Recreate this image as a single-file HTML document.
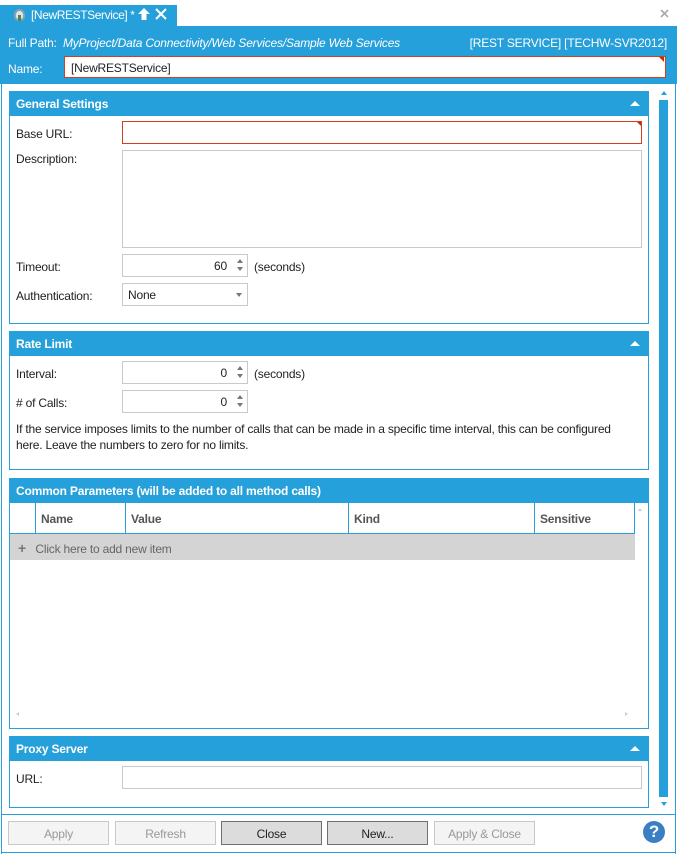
<!DOCTYPE html>
<html><head><meta charset="utf-8"><style>
*{box-sizing:border-box;margin:0;padding:0}
body{width:677px;height:856px;background:#fff;font-family:"Liberation Sans",sans-serif;font-size:12px;color:#222;position:relative;overflow:hidden;letter-spacing:-0.2px}
.a{position:absolute}
.blue{background:#26a0da}
.hdr{position:absolute;left:9px;width:640px;height:25px;background:#26a0da;color:#fff;font-weight:bold;padding:6px 7px;font-size:12px}
.hdr .tri{position:absolute;right:9px;top:10px;width:0;height:0;border-left:5px solid transparent;border-right:5px solid transparent;border-bottom:5px solid #fff}
.box{position:absolute;left:9px;width:640px;border:1px solid #26a0da;border-top:none;background:#fff}
.inp{position:absolute;border:1px solid #c9c9c9;background:#fff}
.lbl{position:absolute;left:16px}
.spin{position:absolute;right:3px;top:4px;width:7px}
.spin:before{content:"";position:absolute;left:0;top:0;border-left:3.5px solid transparent;border-right:3.5px solid transparent;border-bottom:4px solid #777}
.spin:after{content:"";position:absolute;left:0;top:8px;border-left:3.5px solid transparent;border-right:3.5px solid transparent;border-top:4px solid #777}
.btn{position:absolute;top:821px;height:24px;width:101px;border:1px solid #c8c8c8;background:#f4f4f4;color:#999;text-align:center;line-height:24px}
.btn.on{background:#dcdcdc;border-color:#707070;color:#222}
.gh{position:absolute;top:502px;height:31px;border-right:1px solid #26a0da;font-weight:bold;color:#555;padding:10px 5px}
</style></head><body>
<div class="a blue" style="left:0;top:5px;width:177px;height:22px"></div>
<div class="a blue" style="left:0;top:26px;width:677px;height:58px"></div>
<div class="a" style="left:14px;top:9px;width:11px;height:12px;border-radius:50% 50% 40% 40%;background:#dfe7ec;border:2px solid #8ca0ae"></div>
<div class="a" style="left:18px;top:15px;width:3px;height:6px;background:#4a8a4a"></div>
<div class="a" style="left:31px;top:8px;color:#fff;font-size:12px;letter-spacing:-0.4px">[NewRESTService] *</div>
<svg class="a" style="left:137px;top:7px" width="14" height="14"><path d="M7 1 L13 7 H9.5 V13 H4.5 V7 H1 Z" fill="#fff"/></svg>
<svg class="a" style="left:155px;top:8px" width="12" height="12"><path d="M1 1 L11 11 M11 1 L1 11" stroke="#fff" stroke-width="2"/></svg>
<svg class="a" style="left:660px;top:9px" width="9" height="9"><path d="M1 1 L8 8 M8 1 L1 8" stroke="#aaa" stroke-width="1.6"/></svg>
<div class="a" style="left:8px;top:36px;color:#fff">Full Path: <i>&nbsp;MyProject/Data Connectivity/Web Services/Sample Web Services</i></div>
<div class="a" style="right:10px;top:36px;color:#fff">[REST SERVICE] [TECHW-SVR2012]</div>
<div class="a" style="left:8px;top:62px;color:#fff">Name:</div>
<div class="a" style="left:64px;top:56px;width:602px;height:22px;background:#fff;border:1px solid #d04020;padding:4px 6px">[NewRESTService]</div>
<div class="a" style="left:659px;top:57px;border-left:5px solid transparent;border-top:5px solid #c03010"></div>
<div class="a" style="left:1px;top:84px;width:1px;height:770px;background:#26a0da"></div>
<div class="a" style="left:675px;top:84px;width:1px;height:770px;background:#26a0da"></div>
<div class="a" style="left:1px;top:852px;width:675px;height:1px;background:#26a0da"></div>
<div class="a" style="left:1px;top:814px;width:675px;height:1px;background:#26a0da"></div>
<div class="a" style="left:661px;top:91px;border-left:3px solid transparent;border-right:3px solid transparent;border-bottom:4px solid #26a0da"></div>
<div class="a blue" style="left:659px;top:100px;width:9px;height:697px"></div>
<div class="a" style="left:661px;top:802px;border-left:3px solid transparent;border-right:3px solid transparent;border-top:4px solid #26a0da"></div>

<div class="hdr" style="top:91px">General Settings<div class="tri"></div></div>
<div class="box" style="top:116px;height:208px"></div>
<div class="lbl" style="top:127px">Base URL:</div>
<div class="inp" style="left:122px;top:121px;width:520px;height:23px;border-color:#d04020"></div>
<div class="a" style="left:637px;top:122px;border-left:4px solid transparent;border-top:4px solid #c03010"></div>
<div class="lbl" style="top:152px">Description:</div>
<div class="inp" style="left:122px;top:150px;width:520px;height:98px"></div>
<div class="lbl" style="top:260px">Timeout:</div>
<div class="inp" style="left:122px;top:254px;width:126px;height:23px"><span class="a" style="right:20px;top:4px">60</span><div class="spin"></div></div>
<div class="a" style="left:254px;top:260px">(seconds)</div>
<div class="lbl" style="top:289px">Authentication:</div>
<div class="inp" style="left:122px;top:283px;width:126px;height:23px"><span class="a" style="left:5px;top:4px">None</span><div class="a" style="right:5px;top:9px;border-left:3.5px solid transparent;border-right:3.5px solid transparent;border-top:4px solid #777"></div></div>

<div class="hdr" style="top:331px">Rate Limit<div class="tri"></div></div>
<div class="box" style="top:356px;height:114px"></div>
<div class="lbl" style="top:367px">Interval:</div>
<div class="inp" style="left:122px;top:361px;width:126px;height:23px"><span class="a" style="right:20px;top:4px">0</span><div class="spin"></div></div>
<div class="a" style="left:254px;top:367px">(seconds)</div>
<div class="lbl" style="top:396px"># of Calls:</div>
<div class="inp" style="left:122px;top:390px;width:126px;height:23px"><span class="a" style="right:20px;top:4px">0</span><div class="spin"></div></div>
<div class="a" style="left:16px;top:421px;width:612px;line-height:16px">If the service imposes limits to the number of calls that can be made in a specific time interval, this can be configured here. Leave the numbers to zero for no limits.</div>

<div class="hdr" style="top:478px">Common Parameters (will be added to all method calls)</div>
<div class="box" style="top:503px;height:226px"></div>
<div class="gh" style="left:10px;width:26px"></div>
<div class="gh" style="left:36px;width:90px">Name</div>
<div class="gh" style="left:126px;width:223px">Value</div>
<div class="gh" style="left:349px;width:186px">Kind</div>
<div class="gh" style="left:535px;width:100px">Sensitive</div>
<div class="a" style="left:10px;top:533px;width:625px;height:1px;background:#26a0da"></div>
<div class="a" style="left:10px;top:534px;width:625px;height:26px;background:#d5d4d4;color:#666;padding:6px 0 0 8px"><b style="font-size:14px;color:#777">+</b>&nbsp;&nbsp; Click here to add new item</div>
<div class="a" style="left:638px;top:508px;border-left:2.5px solid transparent;border-right:2.5px solid transparent;border-bottom:3px solid #ccc"></div>
<div class="a" style="left:16px;top:712px;border-top:2.5px solid transparent;border-bottom:2.5px solid transparent;border-right:3px solid #ccc"></div>
<div class="a" style="left:625px;top:712px;border-top:2.5px solid transparent;border-bottom:2.5px solid transparent;border-left:3px solid #ccc"></div>

<div class="hdr" style="top:736px">Proxy Server<div class="tri"></div></div>
<div class="box" style="top:761px;height:47px"></div>
<div class="lbl" style="top:772px">URL:</div>
<div class="inp" style="left:122px;top:766px;width:520px;height:23px"></div>

<div class="btn" style="left:8px">Apply</div>
<div class="btn" style="left:115px">Refresh</div>
<div class="btn on" style="left:221px">Close</div>
<div class="btn on" style="left:327px">New...</div>
<div class="btn" style="left:434px">Apply &amp; Close</div>
<div class="a" style="left:643px;top:821px;width:22px;height:22px;border-radius:50%;background:#3a7fc4;color:#fff;font-weight:bold;font-size:17px;text-align:center;line-height:22px">?</div>
</body></html>
